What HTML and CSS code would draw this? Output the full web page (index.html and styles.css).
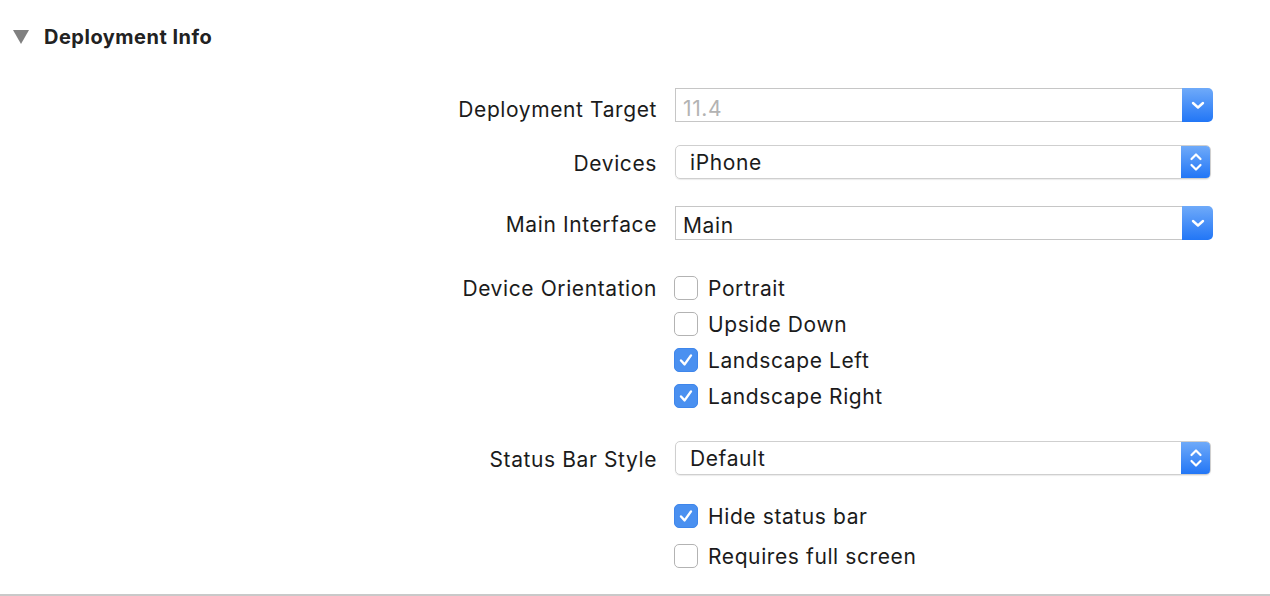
FILE: index.html
```html
<!DOCTYPE html>
<html>
<head>
<meta charset="utf-8">
<link rel="stylesheet" href="styles.css">
</head>
<body>
<div class="panel">
  <div class="header">
    <span class="disclosure"></span>
    <span class="title">Deployment Info</span>
  </div>
  <div class="form">
    <div class="label r-dt">Deployment Target</div>
    <div class="combo r-dt">
      <div class="field placeholder dt">11.4</div>
      <div class="btn"><svg width="14" height="10" viewBox="0 0 14 10"><path d="M2 3 L7 7.5 L12 3" fill="none" stroke="#fff" stroke-width="2.4" stroke-linecap="round" stroke-linejoin="round"/></svg></div>
    </div>

    <div class="label r-dev">Devices</div>
    <div class="popup r-dev">
      <div class="field">iPhone</div>
      <div class="btn"><svg width="14" height="22" viewBox="0 0 14 22"><path d="M2.5 8 L7 3.5 L11.5 8 M2.5 14 L7 18.5 L11.5 14" fill="none" stroke="#fff" stroke-width="2.2" stroke-linecap="round" stroke-linejoin="round"/></svg></div>
    </div>

    <div class="label r-mi">Main Interface</div>
    <div class="combo r-mi">
      <div class="field">Main</div>
      <div class="btn"><svg width="14" height="10" viewBox="0 0 14 10"><path d="M2 3 L7 7.5 L12 3" fill="none" stroke="#fff" stroke-width="2.4" stroke-linecap="round" stroke-linejoin="round"/></svg></div>
    </div>

    <div class="label r-or">Device Orientation</div>
    <div class="checks r-or">
      <div class="check"><span class="box"></span>Portrait</div>
      <div class="check"><span class="box"></span>Upside Down</div>
      <div class="check"><span class="box on"><svg width="18" height="18" viewBox="0 0 18 18"><path d="M4 9.5 L7.6 13.4 L14 4.4" fill="none" stroke="#fff" stroke-width="2.4" stroke-linecap="round" stroke-linejoin="round"/></svg></span>Landscape Left</div>
      <div class="check"><span class="box on"><svg width="18" height="18" viewBox="0 0 18 18"><path d="M4 9.5 L7.6 13.4 L14 4.4" fill="none" stroke="#fff" stroke-width="2.4" stroke-linecap="round" stroke-linejoin="round"/></svg></span>Landscape Right</div>
    </div>

    <div class="label r-sb">Status Bar Style</div>
    <div class="popup r-sb">
      <div class="field">Default</div>
      <div class="btn"><svg width="14" height="22" viewBox="0 0 14 22"><path d="M2.5 8 L7 3.5 L11.5 8 M2.5 14 L7 18.5 L11.5 14" fill="none" stroke="#fff" stroke-width="2.2" stroke-linecap="round" stroke-linejoin="round"/></svg></div>
    </div>

    <div class="label r-hs"></div>
    <div class="checks r-hs">
      <div class="check"><span class="box on"><svg width="18" height="18" viewBox="0 0 18 18"><path d="M4 9.5 L7.6 13.4 L14 4.4" fill="none" stroke="#fff" stroke-width="2.4" stroke-linecap="round" stroke-linejoin="round"/></svg></span>Hide status bar</div>
      <div class="check gap"><span class="box"></span>Requires full screen</div>
    </div>
  </div>
  <div class="rule"></div>
</div>
</body>
</html>
```

FILE: styles.css
```css
html, body {
  margin: 0;
  padding: 0;
  background: #ffffff;
}
body {
  font-family: Inter, "Liberation Sans", sans-serif;
  color: #1b1b1b;
  width: 1270px;
  height: 596px;
  overflow: hidden;
}
.panel {
  display: flex;
  flex-direction: column;
  height: 596px;
}
.header {
  display: flex;
  align-items: center;
  height: 28px;
  margin-top: 23px;
  padding-left: 13px;
}
.disclosure {
  width: 0;
  height: 0;
  border-left: 8px solid transparent;
  border-right: 8px solid transparent;
  border-top: 14px solid #808080;
  margin-right: 15px;
}
.title {
  font-weight: 700;
  font-size: 20px;
  letter-spacing: 0.5px;
  color: #222;
}
.form {
  display: grid;
  grid-template-columns: 657px 538px;
  column-gap: 18px;
  margin-top: 37px;
  font-size: 21px;
  letter-spacing: 0.6px;
}
.label {
  text-align: right;
  height: 34px;
  line-height: 34px;
  padding-top: 2px;
  box-sizing: border-box;
}
.label.r-dt { padding-top: 5px; }
.r-dt { margin-top: 0; }
.r-dev { margin-top: 23px; }
.r-mi { margin-top: 27px; }
.r-or { margin-top: 30px; }
.r-sb { margin-top: 27px; }
.r-hs { margin-top: 23px; }
.label.r-or { height: 36px; line-height: 36px; padding-top: 1px; }

.combo, .popup {
  display: flex;
  height: 34px;
  box-sizing: border-box;
}
.combo .field {
  flex: 1;
  border: 1px solid #c6c6c6;
  border-right: none;
  background: #fff;
  padding-left: 7px;
  line-height: 32px;
  padding-top: 3px;
  box-sizing: border-box;
}
.combo .field.dt { padding-top: 4px; }
.placeholder { color: #b3b3b3; }
.combo .btn {
  width: 31px;
  border-radius: 0 5px 5px 0;
}
.btn {
  display: flex;
  align-items: center;
  justify-content: center;
  background: linear-gradient(#6faaf9, #2276f6);
}
.popup {
  width: 536px;
  border: 1px solid #cfcfcf;
  border-radius: 5px;
  box-shadow: 0 1px 1px rgba(0,0,0,0.08);
  overflow: hidden;
}
.popup .field {
  flex: 1;
  padding-left: 14px;
  line-height: 32px;
  padding-top: 1px;
  box-sizing: border-box;
}
.popup .btn {
  width: 29px;
}
.checks {
  display: flex;
  flex-direction: column;
}
.check {
  display: flex;
  align-items: center;
  height: 36px;
}
.check.gap { margin-top: 4px; }
.box {
  width: 24px;
  height: 24px;
  box-sizing: border-box;
  border: 1px solid #b3b3b3;
  border-radius: 5px;
  background: #fff;
  margin-left: -1px;
  margin-right: 10px;
  display: flex;
  align-items: center;
  justify-content: center;
  flex-shrink: 0;
}
.box.on {
  background: #4a90f0;
  border-color: #3f86eb;
}
.rule {
  margin-top: auto;
  height: 2px;
  background: #c9c9c9;
}
```
